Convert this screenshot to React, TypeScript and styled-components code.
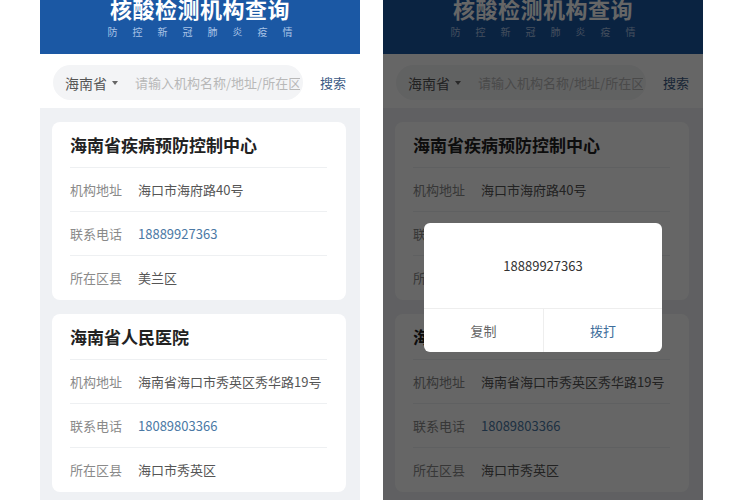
import styled, { createGlobalStyle } from "styled-components";

const GlobalStyle = createGlobalStyle`
  html, body {
    margin: 0;
    padding: 0;
    background: #ffffff;
  }
  body {
    font-family: "Noto Sans CJK SC", "Noto Sans", sans-serif;
  }
`;

const Stage = styled.div`
  display: flex;
  gap: 23px;
  padding-left: 40px;
  height: 500px;
  overflow: hidden;
`;

const Phone = styled.section`
  position: relative;
  width: 320px;
  height: 500px;
  overflow: hidden;
  background: #eff1f4;
  display: flex;
  flex-direction: column;
`;

const Header = styled.header`
  flex: 0 0 54px;
  background: #1b58a4;
  display: flex;
  flex-direction: column;
  align-items: center;
`;

const Title = styled.h1`
  margin: -4px 0 0;
  font-size: 22px;
  line-height: 24px;
  font-weight: 700;
  color: #ffffff;
  letter-spacing: 0.5px;
`;

const Subtitle = styled.div`
  margin: 6px -15px 0 0;
  font-size: 10px;
  line-height: 12px;
  letter-spacing: 15px;
  color: #a9c3e6;
`;

const SearchRow = styled.div`
  flex: 0 0 auto;
  background: #ffffff;
  display: flex;
  align-items: center;
  padding: 11px 0 8px 13px;
`;

const SearchPill = styled.div`
  flex: 0 0 250px;
  height: 35px;
  box-sizing: border-box;
  border-radius: 18px;
  background: #f3f4f6;
  display: flex;
  align-items: center;
  padding: 0 3px 0 12px;
`;

const Province = styled.span`
  font-size: 14px;
  color: #555555;
  white-space: nowrap;
`;

const Caret = styled.span`
  margin-left: 5px;
  width: 0;
  height: 0;
  border-left: 3.5px solid transparent;
  border-right: 3.5px solid transparent;
  border-top: 4px solid #666666;
`;

const SearchInput = styled.input`
  flex: 1;
  min-width: 0;
  margin-left: 17px;
  padding: 0;
  border: none;
  outline: none;
  background: transparent;
  font-family: inherit;
  font-size: 13px;
  color: #333333;
  &::placeholder {
    color: #b8b8b8;
  }
`;

const SearchButton = styled.span`
  margin-left: 17px;
  font-size: 13px;
  color: #3b5a85;
`;

const List = styled.div`
  display: flex;
  flex-direction: column;
  gap: 14px;
  padding: 14px 14px 0 12px;
`;

const Card = styled.article`
  background: #ffffff;
  border-radius: 8px;
  padding: 0 19px 1px 18px;
`;

const CardTitle = styled.h2`
  margin: 0;
  height: 45px;
  display: flex;
  align-items: center;
  font-size: 17px;
  font-weight: 700;
  color: #222222;
`;

const InfoRow = styled.div`
  height: 44px;
  box-sizing: border-box;
  border-top: 1px solid #eef0f2;
  display: flex;
  align-items: center;
  font-size: 13px;
`;

const Label = styled.span`
  flex: 0 0 68px;
  color: #8a8a8a;
`;

const Value = styled.span<{ $link?: boolean }>`
  color: ${(p) => (p.$link ? "#4b79a5" : "#555555")};
  white-space: nowrap;
`;

const Overlay = styled.div`
  position: absolute;
  inset: 0;
  background: rgba(0, 0, 0, 0.6);
  display: flex;
  justify-content: center;
  align-items: flex-start;
  padding-top: 223px;
`;

const Dialog = styled.div`
  width: 238px;
  background: #ffffff;
  border-radius: 6px;
  overflow: hidden;
`;

const DialogMessage = styled.div`
  height: 85px;
  display: flex;
  align-items: center;
  justify-content: center;
  font-size: 13px;
  color: #333333;
`;

const DialogActions = styled.div`
  display: grid;
  grid-template-columns: 1fr 1fr;
  border-top: 1px solid #eeeeee;
`;

const DialogButton = styled.button<{ $primary?: boolean }>`
  height: 43px;
  border: none;
  background: transparent;
  font-family: inherit;
  font-size: 13px;
  color: ${(p) => (p.$primary ? "#3e6e9c" : "#666666")};
  & + & {
    border-left: 1px solid #eeeeee;
  }
`;

const agencies = [
  {
    name: "海南省疾病预防控制中心",
    address: "海口市海府路40号",
    phone: "18889927363",
    district: "美兰区",
  },
  {
    name: "海南省人民医院",
    address: "海南省海口市秀英区秀华路19号",
    phone: "18089803366",
    district: "海口市秀英区",
  },
];

const Screen = ({ dimmed }: { dimmed?: boolean }) => (
  <Phone>
    <Header>
      <Title>核酸检测机构查询</Title>
      <Subtitle>防控新冠肺炎疫情</Subtitle>
    </Header>
    <SearchRow>
      <SearchPill>
        <Province>海南省</Province>
        <Caret />
        <SearchInput placeholder="请输入机构名称/地址/所在区县" readOnly />
      </SearchPill>
      <SearchButton>搜索</SearchButton>
    </SearchRow>
    <List>
      {agencies.map((a) => (
        <Card key={a.name}>
          <CardTitle>{a.name}</CardTitle>
          <InfoRow>
            <Label>机构地址</Label>
            <Value>{a.address}</Value>
          </InfoRow>
          <InfoRow>
            <Label>联系电话</Label>
            <Value $link>{a.phone}</Value>
          </InfoRow>
          <InfoRow>
            <Label>所在区县</Label>
            <Value>{a.district}</Value>
          </InfoRow>
        </Card>
      ))}
    </List>
    {dimmed && (
      <Overlay>
        <Dialog>
          <DialogMessage>{agencies[0].phone}</DialogMessage>
          <DialogActions>
            <DialogButton>复制</DialogButton>
            <DialogButton $primary>拨打</DialogButton>
          </DialogActions>
        </Dialog>
      </Overlay>
    )}
  </Phone>
);

export default function App() {
  return (
    <>
      <GlobalStyle />
      <Stage>
        <Screen />
        <Screen dimmed />
      </Stage>
    </>
  );
}
